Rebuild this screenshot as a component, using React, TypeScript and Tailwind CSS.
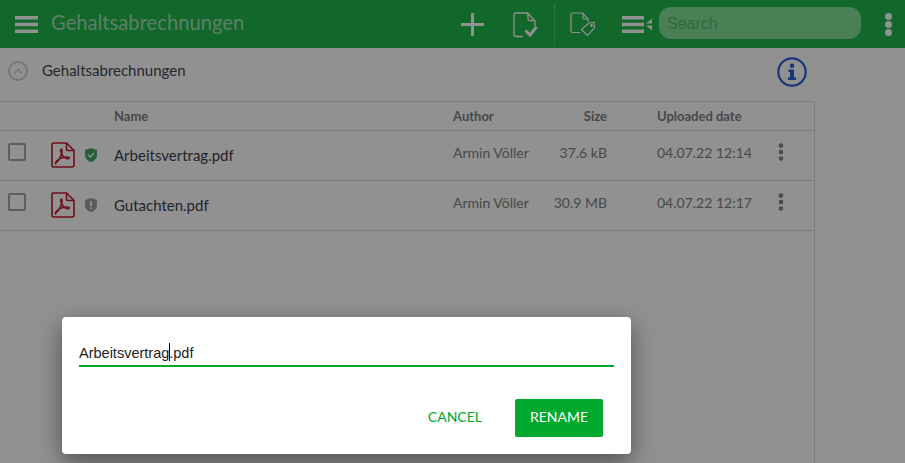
import { EllipsisVertical, ChevronUp } from 'lucide-react'

// ─── Icons ───────────────────────────────────────────────────────────────────

function BarsIcon() {
  return (
    <svg width="23" height="17" viewBox="0 0 23 17" fill="currentColor">
      <rect x="0" y="0" width="23" height="3.5" />
      <rect x="0" y="6.7" width="23" height="3.5" />
      <rect x="0" y="13.500" width="23" height="3.5" />
    </svg>
  )
}

function PlusIcon() {
  return (
    <svg width="23" height="23" viewBox="0 0 23 23" fill="currentColor">
      <rect x="0" y="10" width="23" height="3" />
      <rect x="10" y="0" width="3" height="23" />
    </svg>
  )
}

function FileCheckIcon() {
  return (
    <svg width="25" height="26" viewBox="0 0 25 26" fill="none" stroke="currentColor" strokeWidth="1.3">
      <path d="M10 24.500H2.500a1.500 1.500 0 0 1-1.500-1.500V2.500A1.500 1.500 0 0 1 2.500 1h12l7.500 8v5" />
      <path d="M15 1v6a1.500 1.500 0 0 0 1.500 1.500H22" />
      <path d="M12.500 18.500l4.500 4.500 6.500-8" strokeWidth="3" />
    </svg>
  )
}

function FileTagIcon() {
  return (
    <svg width="25" height="25" viewBox="0 0 25 25" fill="none" stroke="currentColor" strokeWidth="1.2">
      <path d="M10.500 20.500H2.500a1.500 1.500 0 0 1-1.500-1.500V2.500A1.500 1.500 0 0 1 2.500 1h10l5.500 6v3" />
      <path d="M13 1v4.500A1.500 1.500 0 0 0 14.500 7H18" />
      <path d="M11.500 17.500l7.500-6.500 5-.5.500 5.500-7 7.500z" />
      <circle cx="21.500" cy="13.500" r="0.8" />
    </svg>
  )
}

function ListSortIcon() {
  return (
    <svg width="30" height="17" viewBox="0 0 30 17" fill="currentColor">
      <rect x="0" y="0" width="22" height="3.5" />
      <rect x="0" y="6.700" width="22" height="3.5" />
      <rect x="0" y="13.500" width="22" height="3.5" />
      <path d="M30 2.500v5h-6zM30 9.500v5l-6-5z" />
    </svg>
  )
}

function PdfIcon() {
  return (
    <svg width="24" height="26" viewBox="0 0 24 26" fill="none" stroke="#c2182a" strokeWidth="1.6">
      <path d="M2.500 1h13l7.500 7.500V23a2 2 0 0 1-2 2H2.500a1.500 1.500 0 0 1-1.500-1.500V2.500A1.500 1.500 0 0 1 2.500 1z" />
      <path d="M15.500 1v6a1.500 1.500 0 0 0 1.500 1.500h6" />
      <path
        d="M4.500 21c2.500-1 5-5.500 6.300-10 .5-2 .2-4-.5-4s-.9 2 .2 4.500c1.200 2.700 3 4.500 5 5 2 .4 3 0 2.800-.7-.3-.8-2.800-1-5.300-.5-3 .6-5.500 1.700-7.300 3.700-1 1.100-1.700 2-1.200 2.500z"
        strokeWidth="1.5"
      />
    </svg>
  )
}

function ShieldIcon({ color, mark }: { color: string; mark: 'check' | 'alert' }) {
  return (
    <svg width="12" height="14" viewBox="0 0 12 14">
      <path d="M6 0l6 2v5c0 3.500-2.500 5.800-6 7-3.500-1.200-6-3.500-6-7V2z" fill={color} />
      {mark === 'check' ? (
        <path d="M3 7l2.200 2L9 5" fill="none" stroke="#fff" strokeWidth="1.300" />
      ) : (
        <path d="M6 3v5M6 9.500v1.500" fill="none" stroke="#fff" strokeWidth="1.800" />
      )}
    </svg>
  )
}

function InfoIcon() {
  return (
    <svg width="30" height="30" viewBox="0 0 30 30">
      <circle cx="15" cy="15" r="13.700" fill="none" stroke="#2f5fd8" strokeWidth="2.200" />
      <circle cx="15" cy="8.800" r="2.200" fill="#2f5fd8" />
      <path d="M11.500 12.500h5.500v8h2v2.500h-8v-2.500h2v-5.500h-1.500z" fill="#2f5fd8" />
    </svg>
  )
}

// ─── Row ─────────────────────────────────────────────────────────────────────

function FileRow({
  name,
  size,
  date,
  shield,
  mark,
}: {
  name: string
  size: string
  date: string
  shield: string
  mark: 'check' | 'alert'
}) {
  return (
    <div className="flex h-[50px] border-b border-[#d8d8d8]">
      <div className="w-[51px] pl-2 pt-[12px]">
        <div className="w-[18px] h-[18px] border-2 border-[#a6a6a6] rounded-[2px]" />
      </div>
      <div className="w-[34px] pt-[11px]">
        <PdfIcon />
      </div>
      <div className="w-[29px] pt-[17px]">
        <ShieldIcon color={shield} mark={mark} />
      </div>
      <div className="w-[339px] pt-[14px] text-[15px] leading-5 text-[#3e3e4c]">{name}</div>
      <div className="w-[90px] pt-[12px] text-[14px] leading-5 text-[#808080]">Armin Völler</div>
      <div className="w-[64px] pt-[12px] text-[14px] leading-5 text-[#808080] text-right">{size}</div>
      <div className="w-[50px]" />
      <div className="w-[113px] pt-[12px] text-[14px] leading-5 text-[#808080]">{date}</div>
      <div className="w-[20px] pt-[10px] text-[#7f7f7f]">
        <EllipsisVertical size={22} strokeWidth={3} />
      </div>
    </div>
  )
}

// ─── App ─────────────────────────────────────────────────────────────────────

export default function App() {
  return (
    <div className="relative w-[905px] h-[463px] overflow-hidden bg-white font-['Lato',sans-serif]">
      {/* Top bar */}
      <header className="flex items-center h-12 bg-[#20b54b] text-white">
        <div className="w-[51px] pl-[15px]">
          <BarsIcon />
        </div>
        <div className="w-[399px] pb-1 text-[20.200px] text-white/60">Gehaltsabrechnungen</div>
        <div className="w-[63px] pl-[11px]">
          <PlusIcon />
        </div>
        <div className="w-[41px] pt-[1px]">
          <FileCheckIcon />
        </div>
        <div className="h-10 border-l border-dotted border-white/50" />
        <div className="w-[67px] pl-[15px] pt-[1px]">
          <FileTagIcon />
        </div>
        <div className="w-[37px]">
          <ListSortIcon />
        </div>
        <div className="flex items-center w-[202px] h-8 mb-[2px] pt-[2px] rounded-[12px] bg-[#84e097] pl-2 text-[16px] text-[#52ba6e] font-['Liberation_Sans',sans-serif]">
          Search
        </div>
        <div className="ml-6 flex flex-col gap-[1px]">
          <span className="w-[7px] h-[7px] rounded-full bg-white" />
          <span className="w-[7px] h-[7px] rounded-full bg-white" />
          <span className="w-[7px] h-[7px] rounded-full bg-white" />
        </div>
      </header>

      {/* Folder heading */}
      <div className="flex items-center h-[53px] w-[814px] pb-[7px]">
        <div className="ml-2 flex items-center justify-center w-5 h-5 rounded-full border-2 border-[#d0d0d0] text-[#d0d0d0]">
          <ChevronUp size={14} strokeWidth={3} />
        </div>
        <span className="ml-[14px] pb-[2px] text-[15px] text-[#44444f]">Gehaltsabrechnungen</span>
        <div className="ml-auto -mr-[-7px] translate-y-[1px]">
          <InfoIcon />
        </div>
      </div>

      {/* File table */}
      <div className="w-[815px] h-[362px] border-t border-r border-[#d8d8d8]">
        <div className="flex items-center h-[29px] pt-[2px] border-b border-[#d8d8d8] text-[13px] font-bold text-[#808080]">
          <div className="w-[114px]" />
          <div className="w-[339px]">Name</div>
          <div className="w-[90px]">Author</div>
          <div className="w-[64px] text-right">Size</div>
          <div className="w-[50px]" />
          <div>Uploaded date</div>
        </div>
        <FileRow name="Arbeitsvertrag.pdf" size="37.6 kB" date="04.07.22 12:14" shield="#43a662" mark="check" />
        <FileRow name="Gutachten.pdf" size="30.9 MB" date="04.07.22 12:17" shield="#9e9e9e" mark="alert" />
      </div>

      {/* Backdrop + rename dialog */}
      <div className="absolute inset-0 bg-black/[.43]">
        <div className="absolute left-[62px] top-[317px] w-[569px] h-[137px] rounded-[4px] bg-white shadow-[0_8px_24px_rgba(0,0,0,0.45)] px-[17px]">
          <div className="relative h-[50px] w-[535px] border-b-2 border-[#00a82d] pt-[26px] text-[14.500px] leading-5 text-[#222] font-['Liberation_Sans',sans-serif]">
            Arbeitsvertrag.pdf
            <span className="absolute left-[90px] top-[26px] w-px h-[18px] bg-black" />
          </div>
          <div className="flex items-center justify-end mt-[32px] -mr-[-11px]">
            <button className="pb-1 text-[14px] text-[#00a82d] mr-[33px]">CANCEL</button>
            <button className="w-[88px] h-[38px] pb-1 rounded-[2px] bg-[#00a82d] text-[14px] text-white">RENAME</button>
          </div>
        </div>
      </div>
    </div>
  )
}
